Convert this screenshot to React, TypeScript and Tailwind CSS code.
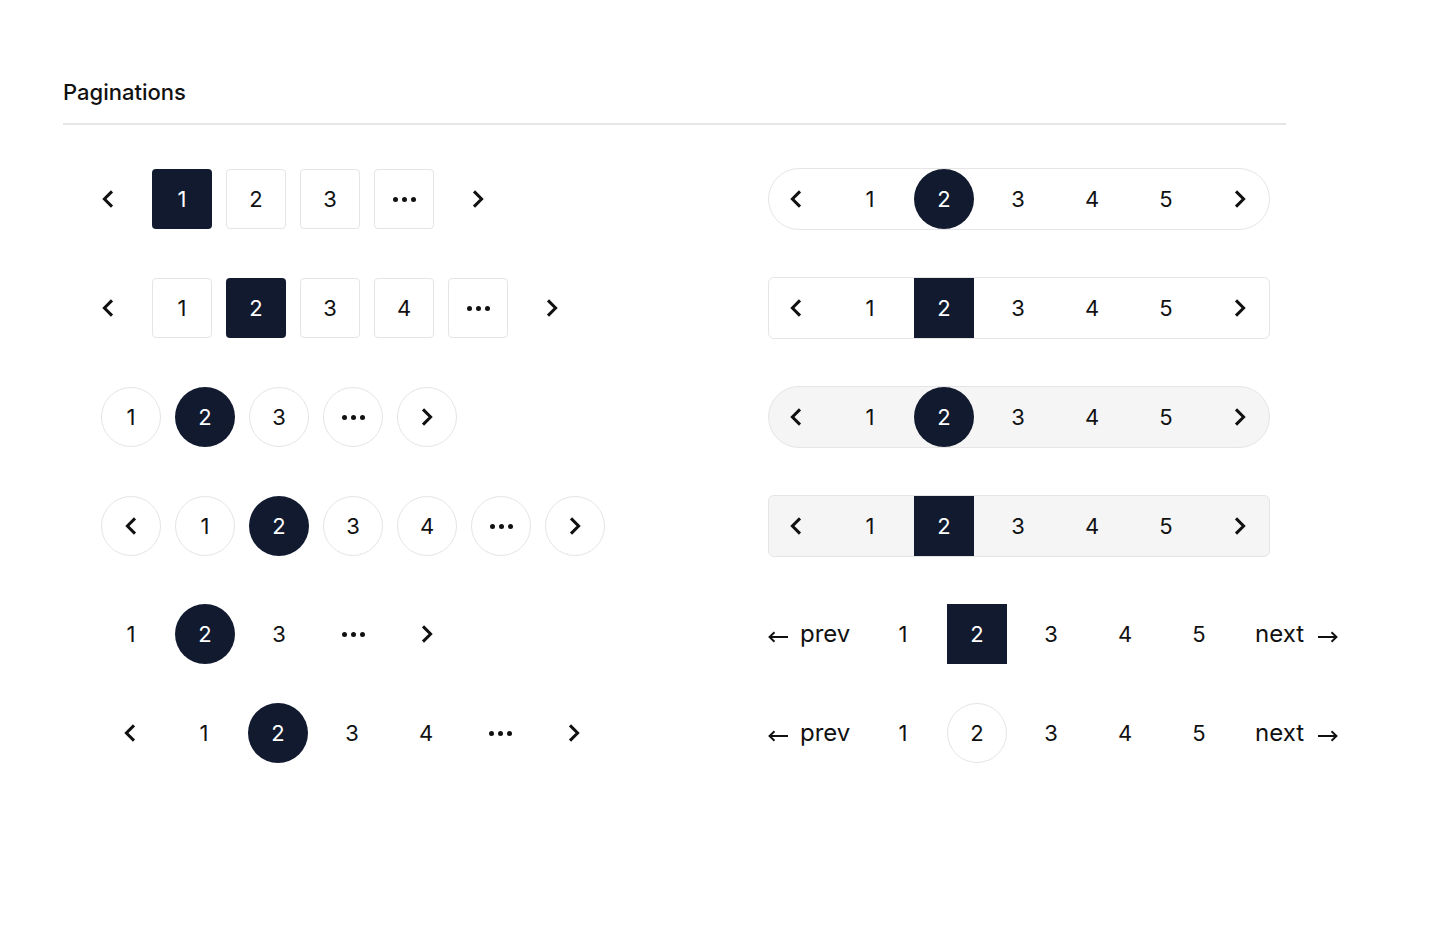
import React from "react";

const ACTIVE = "bg-[#111a2f] text-white";

const ChevronLeft = () => (
  <svg width="12" height="18" viewBox="0 0 12 18" fill="none">
    <path d="M10 1.4 L2.4 9 L10 16.6" stroke="#111" strokeWidth="3" />
  </svg>
);

const ChevronRight = () => (
  <svg width="12" height="18" viewBox="0 0 12 18" fill="none">
    <path d="M2 1.4 L9.6 9 L2 16.6" stroke="#111" strokeWidth="3" />
  </svg>
);

const Dots = () => (
  <div className="flex gap-[4px]">
    <span className="w-[5px] h-[5px] rounded-full bg-[#111]" />
    <span className="w-[5px] h-[5px] rounded-full bg-[#111]" />
    <span className="w-[5px] h-[5px] rounded-full bg-[#111]" />
  </div>
);

const ArrowLeft = () => (
  <svg width="21" height="12" viewBox="0 0 21 12" fill="none" className="mt-[6px]">
    <path d="M1.5 6 H20 M6.5 1.2 L1.5 6 L6.5 10.8" stroke="#111" strokeWidth="1.9" />
  </svg>
);

const ArrowRight = () => (
  <svg width="21" height="12" viewBox="0 0 21 12" fill="none" className="mt-[6px]">
    <path d="M1 6 H19.5 M14.5 1.2 L19.5 6 L14.5 10.8" stroke="#111" strokeWidth="1.9" />
  </svg>
);

type Item = "<" | ">" | "..." | number;

// 하나의 페이지 셀
const Cell = ({
  item,
  shape,
  active,
}: {
  item: Item;
  shape: string;
  active?: boolean;
}) => {
  let content: React.ReactNode = item;
  if (item === "<") content = <ChevronLeft />;
  if (item === ">") content = <ChevronRight />;
  if (item === "...") content = <Dots />;
  return (
    <div
      className={`w-[60px] h-[60px] shrink-0 flex items-center justify-center text-[22px] ${shape} ${
        active ? ACTIVE : "text-[#111]"
      }`}
    >
      {content}
    </div>
  );
};

const BOX = "rounded-[4px] border border-[#e5e5e5]";
const CIRCLE = "rounded-full border border-[#e5e5e5]";

// 왼쪽 열 행들
const LeftRow1 = () => (
  <div className="flex gap-[14px] ml-[15px]">
    <Cell item="<" shape="" />
    <Cell item={1} shape="rounded-[4px]" active />
    <Cell item={2} shape={BOX} />
    <Cell item={3} shape={BOX} />
    <Cell item="..." shape={BOX} />
    <Cell item=">" shape="" />
  </div>
);

const LeftRow2 = () => (
  <div className="flex gap-[14px] ml-[15px]">
    <Cell item="<" shape="" />
    <Cell item={1} shape={BOX} />
    <Cell item={2} shape="rounded-[4px]" active />
    <Cell item={3} shape={BOX} />
    <Cell item={4} shape={BOX} />
    <Cell item="..." shape={BOX} />
    <Cell item=">" shape="" />
  </div>
);

const LeftRow3 = () => (
  <div className="flex gap-[14px] ml-[38px]">
    <Cell item={1} shape={CIRCLE} />
    <Cell item={2} shape="rounded-full" active />
    <Cell item={3} shape={CIRCLE} />
    <Cell item="..." shape={CIRCLE} />
    <Cell item=">" shape={CIRCLE} />
  </div>
);

const LeftRow4 = () => (
  <div className="flex gap-[14px] ml-[38px]">
    <Cell item="<" shape={CIRCLE} />
    <Cell item={1} shape={CIRCLE} />
    <Cell item={2} shape="rounded-full" active />
    <Cell item={3} shape={CIRCLE} />
    <Cell item={4} shape={CIRCLE} />
    <Cell item="..." shape={CIRCLE} />
    <Cell item=">" shape={CIRCLE} />
  </div>
);

const LeftRow5 = () => (
  <div className="flex gap-[14px] ml-[38px]">
    <Cell item={1} shape="" />
    <Cell item={2} shape="rounded-full" active />
    <Cell item={3} shape="" />
    <Cell item="..." shape="" />
    <Cell item=">" shape="" />
  </div>
);

const LeftRow6 = () => (
  <div className="flex gap-[14px] ml-[37px]">
    <Cell item="<" shape="" />
    <Cell item={1} shape="" />
    <Cell item={2} shape="rounded-full" active />
    <Cell item={3} shape="" />
    <Cell item={4} shape="" />
    <Cell item="..." shape="" />
    <Cell item=">" shape="" />
  </div>
);

// 오른쪽 열: 테두리 그룹형
const Group = ({ wrap, activeShape }: { wrap: string; activeShape: string }) => (
  <div className={`w-[502px] h-[62px] flex items-center border border-[#e5e5e5] ${wrap}`}>
    <div className="flex gap-[14px] -ml-[3px]">
      {(["<", 1, 2, 3, 4, 5, ">"] as Item[]).map((it, i) => (
        <Cell key={i} item={it} shape={it === 2 ? activeShape : ""} active={it === 2} />
      ))}
    </div>
  </div>
);

const PrevNext = ({ outlined }: { outlined?: boolean }) => (
  <div className="flex items-center text-[24px] text-[#111]">
    <div className="w-[105px] flex items-center gap-[11px]">
      <ArrowLeft />
      <span>prev</span>
    </div>
    <div className="flex gap-[14px]">
      {[1, 2, 3, 4, 5].map((n) =>
        n === 2 ? (
          outlined ? (
            <Cell key={n} item={n} shape={CIRCLE} />
          ) : (
            <Cell key={n} item={n} shape="" active />
          )
        ) : (
          <Cell key={n} item={n} shape="" />
        ),
      )}
    </div>
    <div className="ml-[26px] flex items-center gap-[13px]">
      <span>next</span>
      <ArrowRight />
    </div>
  </div>
);

const rows: { left: React.ReactNode; right: React.ReactNode; gap: string }[] = [
  { left: <LeftRow1 />, right: <Group wrap="rounded-full" activeShape="rounded-full" />, gap: "" },
  { left: <LeftRow2 />, right: <Group wrap="rounded-[6px]" activeShape="" />, gap: "mt-[49px]" },
  { left: <LeftRow3 />, right: <Group wrap="rounded-full bg-[#f5f5f5]" activeShape="rounded-full" />, gap: "mt-[49px]" },
  { left: <LeftRow4 />, right: <Group wrap="rounded-[6px] bg-[#f5f5f5]" activeShape="" />, gap: "mt-[49px]" },
  { left: <LeftRow5 />, right: <PrevNext />, gap: "mt-[49px]" },
  { left: <LeftRow6 />, right: <PrevNext outlined />, gap: "mt-[39px]" },
];

export default function App() {
  return (
    <div className="min-h-screen w-full bg-white font-['Inter',sans-serif] px-[63px] pt-[78px]">
      <h1 className="text-[22px] leading-[28px] font-medium text-[#111]">Paginations</h1>
      <div className="mt-[17px] h-[2px] w-[1223px] bg-[#e5e5e5]" />
      <div className="mt-[43px] flex flex-col">
        {rows.map((r, i) => (
          <div key={i} className={`grid grid-cols-[705px_1fr] h-[60px] items-center ${r.gap}`}>
            <div>{r.left}</div>
            <div>{r.right}</div>
          </div>
        ))}
      </div>
    </div>
  );
}
